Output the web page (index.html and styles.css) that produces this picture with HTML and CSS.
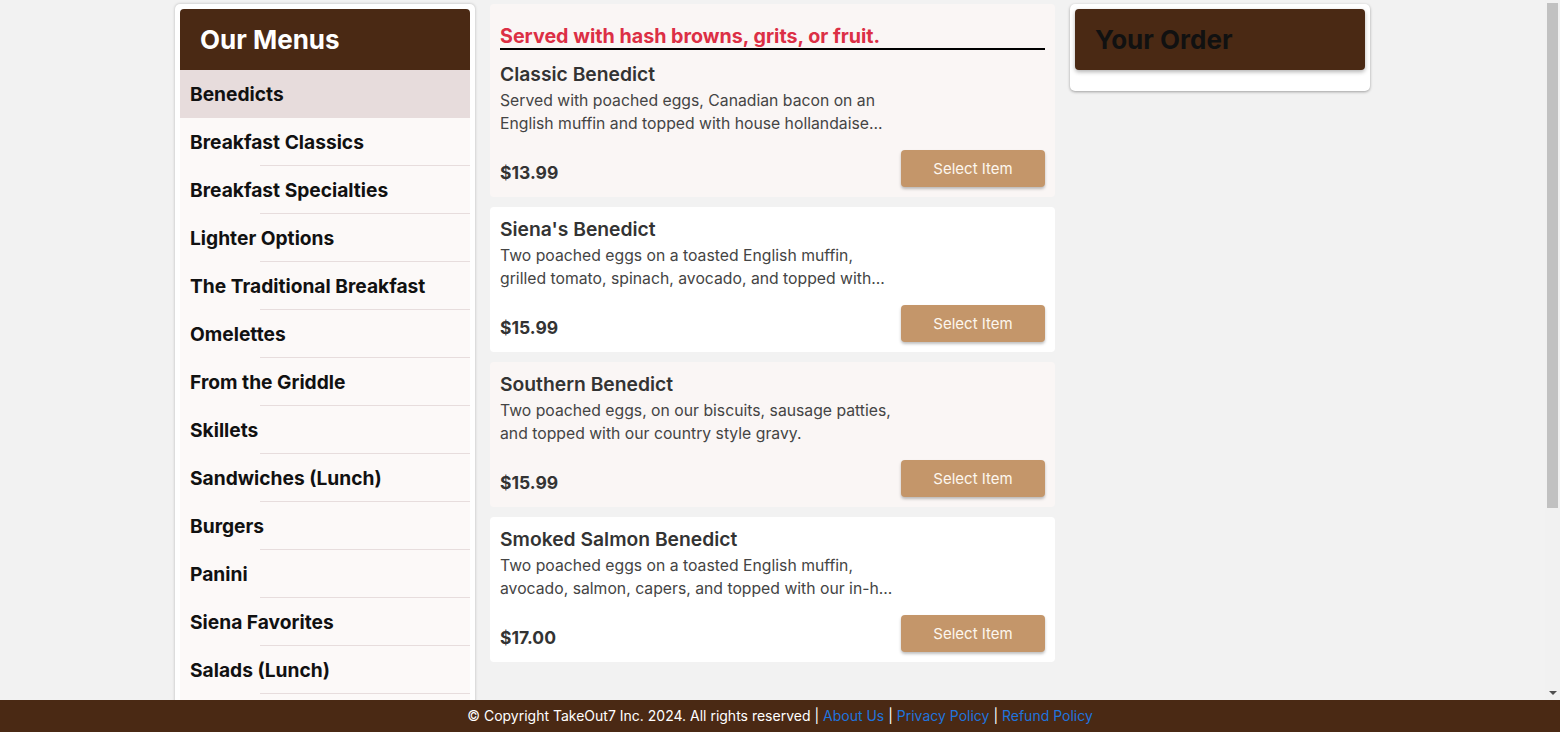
FILE: index.html
```html
<!DOCTYPE html>
<html lang="en">
<head>
<meta charset="utf-8">
<title>TakeOut7 - Our Menus</title>
<link rel="stylesheet" href="styles.css">
</head>
<body>
<div class="viewport">
  <div class="scroller">
    <div class="layout">
      <aside class="side card-box">
        <h2 class="box-head">Our Menus</h2>
        <ul class="menu-list">
          <li class="menu-item active">Benedicts</li>
          <li class="menu-item">Breakfast Classics</li>
          <li class="menu-item">Breakfast Specialties</li>
          <li class="menu-item">Lighter Options</li>
          <li class="menu-item">The Traditional Breakfast</li>
          <li class="menu-item">Omelettes</li>
          <li class="menu-item">From the Griddle</li>
          <li class="menu-item">Skillets</li>
          <li class="menu-item">Sandwiches (Lunch)</li>
          <li class="menu-item">Burgers</li>
          <li class="menu-item">Panini</li>
          <li class="menu-item">Siena Favorites</li>
          <li class="menu-item">Salads (Lunch)</li>
          <li class="menu-item">Soups</li>
          <li class="menu-item">Kids Menu</li>
          <li class="menu-item">Sides</li>
          <li class="menu-item">Beverages</li>
          <li class="menu-item">Desserts</li>
        </ul>
      </aside>

      <main class="items">
        <section class="item">
          <h3 class="note">Served with hash browns, grits, or fruit.</h3>
          <h4 class="item-title">Classic Benedict</h4>
          <p class="item-desc">Served with poached eggs, Canadian bacon on an<br>English muffin and topped with house hollandaise...</p>
          <div class="item-foot">
            <span class="price">$13.99</span>
            <button class="btn">Select Item</button>
          </div>
        </section>
        <section class="item">
          <h4 class="item-title">Siena's Benedict</h4>
          <p class="item-desc">Two poached eggs on a toasted English muffin,<br>grilled tomato, spinach, avocado, and topped with...</p>
          <div class="item-foot">
            <span class="price">$15.99</span>
            <button class="btn">Select Item</button>
          </div>
        </section>
        <section class="item">
          <h4 class="item-title">Southern Benedict</h4>
          <p class="item-desc">Two poached eggs, on our biscuits, sausage patties,<br>and topped with our country style gravy.</p>
          <div class="item-foot">
            <span class="price">$15.99</span>
            <button class="btn">Select Item</button>
          </div>
        </section>
        <section class="item">
          <h4 class="item-title">Smoked Salmon Benedict</h4>
          <p class="item-desc">Two poached eggs on a toasted English muffin,<br>avocado, salmon, capers, and topped with our in-h...</p>
          <div class="item-foot">
            <span class="price">$17.00</span>
            <button class="btn">Select Item</button>
          </div>
        </section>
      </main>

      <aside class="order card-box">
        <h2 class="box-head order-head">Your Order</h2>
      </aside>
    </div>
  </div>
  <div class="scrollbar" aria-hidden="true">
    <div class="thumb"></div>
    <div class="track-rest"></div>
    <div class="arrow-down"></div>
  </div>
</div>
<footer class="footer">
  © Copyright TakeOut7 Inc. 2024. All rights reserved | <a href="#">About Us</a> | <a href="#">Privacy Policy</a> | <a href="#">Refund Policy</a>
</footer>
</body>
</html>
```

FILE: styles.css
```css
html, body {
  margin: 0;
  height: 100%;
}

body {
  display: flex;
  flex-direction: column;
  background: #f2f2f2;
  font-family: Inter, "Open Sans", "Liberation Sans", sans-serif;
  color: #111;
}

.viewport {
  flex: 1;
  min-height: 0;
  display: flex;
}

.scroller {
  flex: 1;
  min-width: 0;
  overflow-y: auto;
  scrollbar-width: none;
}

.scrollbar {
  width: 15px;
  flex: none;
  background: #f1f1f1;
  display: flex;
  flex-direction: column;
  align-items: center;
}

.thumb {
  width: 11px;
  height: 505px;
  margin-top: 3px;
  background: #c1c1c1;
}

.track-rest {
  flex: 1;
}

.arrow-down {
  width: 0;
  height: 0;
  margin: 0 0 5px;
  border-left: 4px solid transparent;
  border-right: 4px solid transparent;
  border-top: 4px solid #505050;
}

.layout {
  width: 1195px;
  margin: 0 auto;
  padding-top: 4px;
  display: flex;
  align-items: flex-start;
  gap: 15px;
}

.card-box {
  width: 300px;
  box-sizing: border-box;
  background: #fff;
  border-radius: 5px;
  padding: 5px;
  box-shadow: 0 0 3px rgba(0, 0, 0, 0.25);
}

.box-head {
  margin: 0;
  background: #4a2914;
  color: #fff;
  padding: 15px 20px;
  font-size: 26px;
  line-height: 31px;
  font-weight: 700;
  border-radius: 4px 4px 0 0;
}

.menu-list {
  list-style: none;
  margin: 0;
  padding: 0;
}

.menu-item {
  height: 48px;
  display: flex;
  align-items: center;
  padding-left: 10px;
  font-size: 19.2px;
  font-weight: 700;
  color: #111;
  background: linear-gradient(#e7dddd, #e7dddd) no-repeat right bottom / calc(100% - 80px) 1px, #fcf9f8;
}

.menu-item.active {
  background: #e7dcdc;
}

.items {
  width: 565px;
  display: flex;
  flex-direction: column;
  gap: 10px;
}

.item {
  background: #fff;
  border-radius: 4px;
  padding: 10px;
}

.item:nth-child(odd) {
  background: #faf6f5;
}

.note {
  margin: 10px 0 12px;
  color: #dc2f45;
  font-size: 19.7px;
  line-height: 24px;
  font-weight: 700;
  border-bottom: 2px solid #000;
}

.item-title {
  margin: 0;
  font-size: 19.3px;
  line-height: 24px;
  font-weight: 600;
  color: #333;
}

.item-desc {
  margin: 4px 0 0;
  font-size: 15.75px;
  line-height: 22.5px;
  color: #444;
  white-space: nowrap;
  height: 45px;
}

.item-foot {
  margin-top: 15px;
  display: flex;
  justify-content: space-between;
  align-items: center;
}

.price {
  font-size: 17.5px;
  font-weight: 700;
  color: #333;
  padding-top: 7px;
}

.btn {
  width: 144px;
  height: 37px;
  border: 0;
  border-radius: 4px;
  background: #c4966a;
  color: #fdf6ee;
  font-family: inherit;
  font-size: 15px;
  box-shadow: 0 2px 3px rgba(0, 0, 0, 0.25);
}

.order {
  padding-bottom: 21px;
  box-shadow: 0 1px 3px rgba(0, 0, 0, 0.35);
}

.order-head {
  color: #111;
  border-radius: 4px;
  box-shadow: 0 2px 4px rgba(0, 0, 0, 0.3);
}

.footer {
  height: 32px;
  flex: none;
  background: #4a2914;
  color: #fff;
  font-size: 14px;
  line-height: 32px;
  text-align: center;
}

.footer a {
  color: #1f74de;
  text-decoration: none;
}
```
